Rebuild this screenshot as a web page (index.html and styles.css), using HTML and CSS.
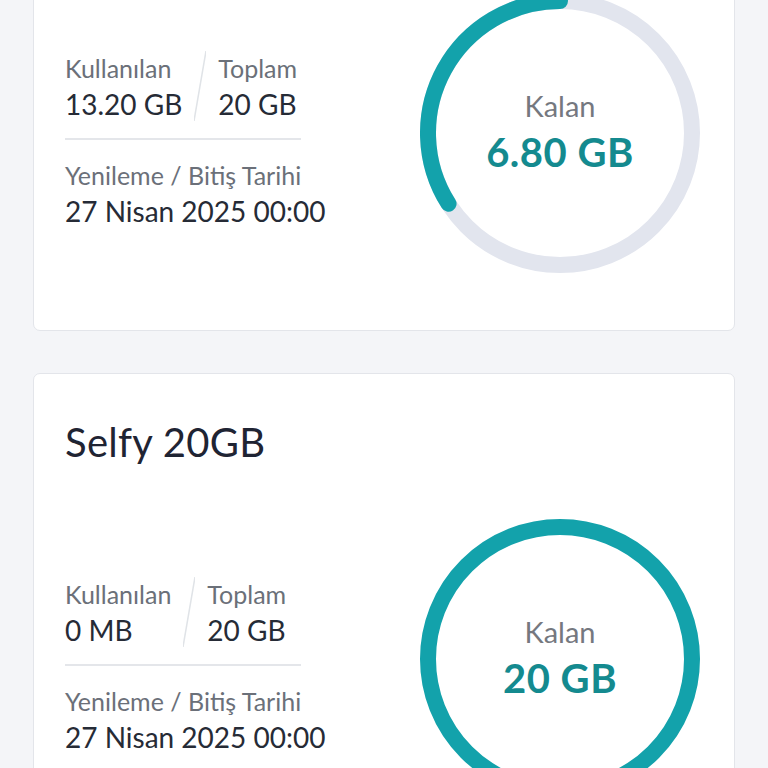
FILE: index.html
```html
<!DOCTYPE html>
<html lang="tr">
<head>
<meta charset="utf-8">
<title>Paketler</title>
<link rel="stylesheet" href="styles.css">
</head>
<body>
<main class="page">
  <section class="card">
    <h2 class="card-title">Selfy 20GB</h2>
    <div class="usage">
      <div class="info">
        <div class="pair">
          <div class="col">
            <div class="label">Kullanılan</div>
            <div class="value">13.20 GB</div>
          </div>
          <svg class="slash" width="12" height="70" viewBox="0 0 12 70"><line x1="12" y1="0" x2="0" y2="70"/></svg>
          <div class="col">
            <div class="label">Toplam</div>
            <div class="value">20 GB</div>
          </div>
        </div>
        <div class="divider"></div>
        <div class="label">Yenileme / Bitiş Tarihi</div>
        <div class="value">27 Nisan 2025 00:00</div>
      </div>
      <div class="ring">
        <svg class="ring-svg" width="280" height="280" viewBox="0 0 280 280">
          <circle class="track" cx="140" cy="140" r="132"/>
          <path class="arc" d="M140 8 A132 132 0 0 0 28.55 210.73"/>
        </svg>
        <div class="ring-text">
          <div class="ring-label">Kalan</div>
          <div class="ring-value">6.80 GB</div>
        </div>
      </div>
    </div>
  </section>

  <section class="card">
    <h2 class="card-title">Selfy 20GB</h2>
    <div class="usage">
      <div class="info">
        <div class="pair">
          <div class="col">
            <div class="label">Kullanılan</div>
            <div class="value">0 MB</div>
          </div>
          <svg class="slash" width="12" height="70" viewBox="0 0 12 70"><line x1="12" y1="0" x2="0" y2="70"/></svg>
          <div class="col">
            <div class="label">Toplam</div>
            <div class="value">20 GB</div>
          </div>
        </div>
        <div class="divider"></div>
        <div class="label">Yenileme / Bitiş Tarihi</div>
        <div class="value">27 Nisan 2025 00:00</div>
      </div>
      <div class="ring">
        <svg class="ring-svg" width="280" height="280" viewBox="0 0 280 280">
          <circle class="full" cx="140" cy="140" r="132"/>
        </svg>
        <div class="ring-text">
          <div class="ring-label">Kalan</div>
          <div class="ring-value">20 GB</div>
        </div>
      </div>
    </div>
  </section>
</main>
</body>
</html>
```
FILE: styles.css
```css
* { box-sizing: border-box; }
html, body { margin: 0; padding: 0; }
body {
  background: #f4f5f8;
  font-family: "Lato", "Noto Sans", sans-serif;
  color: #262b36;
  overflow: hidden;
}
.page {
  padding: 0 33px;
  margin-top: -153px;
  display: flex;
  flex-direction: column;
  gap: 42px;
}
.card {
  background: #ffffff;
  border: 1.5px solid #e3e5ea;
  border-radius: 7px;
  padding: 46px 34px 57px 31px;
}
.card-title {
  margin: 0;
  font-size: 40px;
  line-height: 44px;
  font-weight: 400;
  letter-spacing: 0.3px;
  color: #1f2433;
}
.usage {
  margin-top: 55px;
  display: flex;
  justify-content: space-between;
  align-items: flex-start;
}
.info {
  margin-top: 57px;
  display: flex;
  flex-direction: column;
}
.pair {
  display: flex;
  align-items: center;
  gap: 12px;
}
.col { display: flex; flex-direction: column; }
.slash line { stroke: #e0e3e7; stroke-width: 1.5; }
.label {
  font-size: 25px;
  line-height: 36px;
  color: #6b7079;
}
.value {
  font-size: 28px;
  line-height: 36px;
  color: #262b36;
}
.divider {
  width: 236px;
  height: 2px;
  background: #e4e6ea;
  margin: 16px 0 17px;
}
.ring {
  display: grid;
  width: 280px;
  height: 280px;
}
.ring-svg, .ring-text { grid-area: 1 / 1; }
.track, .full, .arc { fill: none; stroke-width: 16; }
.track { stroke: #e2e5ee; }
.full { stroke: #13a2ab; }
.arc { stroke: #13a2ab; stroke-linecap: round; }
.ring-text {
  display: flex;
  flex-direction: column;
  align-items: center;
  justify-content: center;
  padding-bottom: 2px;
}
.ring-label {
  font-size: 29px;
  line-height: 40px;
  color: #75787f;
}
.ring-value {
  font-size: 40px;
  line-height: 52px;
  font-weight: 700;
  letter-spacing: 0.5px;
  color: #148a8f;
}
```
